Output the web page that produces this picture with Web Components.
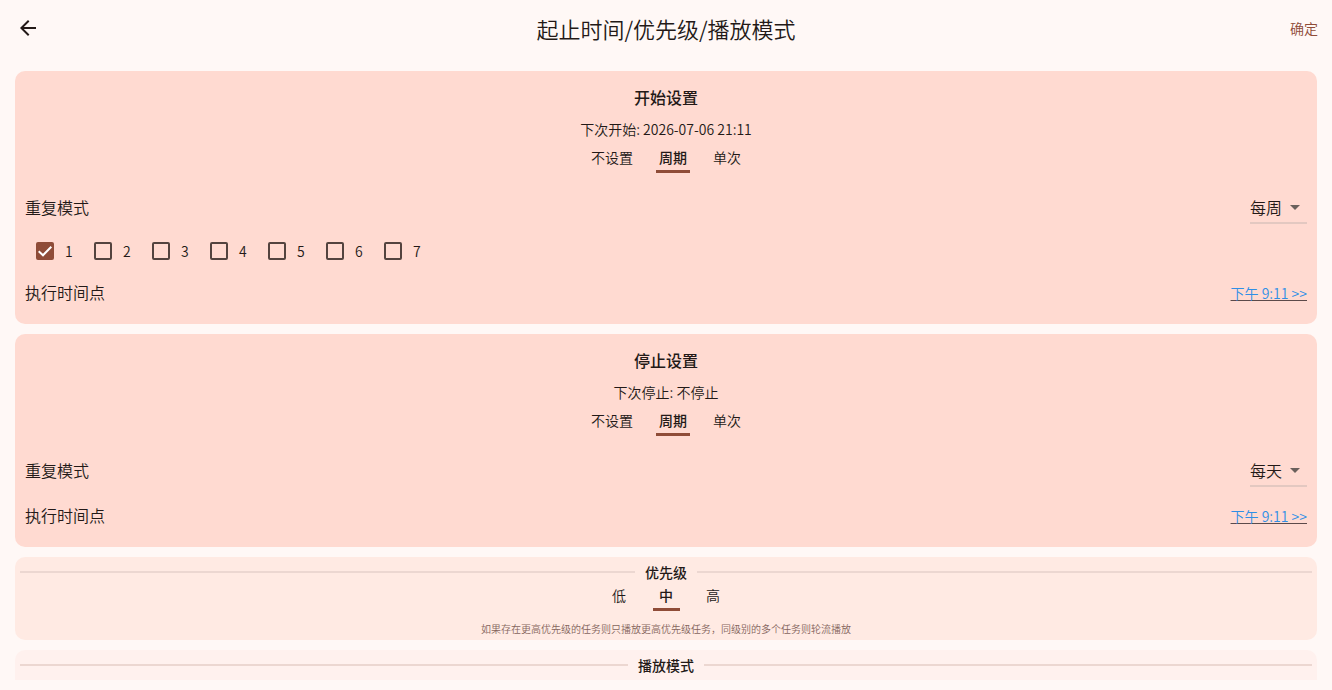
<!DOCTYPE html>
<html lang="zh-CN">
<head>
<meta charset="utf-8">
<meta name="viewport" content="width=device-width, initial-scale=1">
<title>起止时间/优先级/播放模式</title>
<style>
html, body {
  height: 100%;
  margin: 0;
}
body {
  --primary: #8f4c38;
  --text: #231917;
  --muted: #53433f;
  --card: #ffdad1;
  background: #fff8f6;
  color: var(--text);
  font: 350 14px/20px "Noto Sans CJK SC", sans-serif;
}
</style>
</head>
<body>
<task-page>
  <page-header slot="header" title="起止时间/优先级/播放模式" action="确定"></page-header>

  <setting-card heading="开始设置">
    <span slot="summary">下次开始: 2026-07-06 21:11</span>
    <tab-group slot="tabs" items="不设置,周期,单次" selected="1"></tab-group>
    <setting-row label="重复模式" class="tall"><drop-down label="重复模式" items="每周,每天,每月"></drop-down></setting-row>
    <day-picker days="7" checked="1"></day-picker>
    <setting-row label="执行时间点"><time-link value="下午 9:11"></time-link></setting-row>
  </setting-card>

  <setting-card heading="停止设置">
    <span slot="summary">下次停止: 不停止</span>
    <tab-group slot="tabs" items="不设置,周期,单次" selected="1"></tab-group>
    <setting-row label="重复模式" class="tall"><drop-down label="重复模式" items="每天,每周,每月"></drop-down></setting-row>
    <setting-row label="执行时间点"><time-link value="下午 9:11"></time-link></setting-row>
  </setting-card>

  <divider-card heading="优先级" style="--card: #ffeae3">
    <tab-group items="低,中,高" selected="1"></tab-group>
    <span slot="hint">如果存在更高优先级的任务则只播放更高优先级任务，同级别的多个任务则轮流播放</span>
  </divider-card>

  <divider-card heading="播放模式" style="--card: #fff1ee"></divider-card>
</task-page>

<script>
class BaseElement extends HTMLElement {
  constructor() {
    super();
    this._shadowRoot = this.attachShadow({ mode: 'open' });
  }

  get items() {
    return (this.getAttribute('items') || '').split(',');
  }

  attr(name) {
    return this.getAttribute(name) || '';
  }

  connectedCallback() {
    this._shadowRoot.innerHTML = this.render();
    this.attachEvents();
  }

  attachEvents() {}
}

class TaskPage extends BaseElement {
  render() {
    return `
<style>
:host {
  display: flex;
  flex-direction: column;
  height: 100vh;
  box-sizing: border-box;
  padding-bottom: 10px;
}
main {
  flex: 1;
  min-height: 0;
  overflow-y: auto;
  scrollbar-width: none;
  display: flex;
  flex-direction: column;
  gap: 10px;
  padding: 15px 15px 0;
}
</style>
<slot name="header"></slot>
<main><slot></slot></main>
`;
  }
}

class PageHeader extends BaseElement {
  render() {
    return `
<style>
:host {
  display: grid;
  grid-template-columns: 1fr auto 1fr;
  align-items: center;
  height: 56px;
  flex: none;
}
h1 {
  margin: 0;
  font-size: 22px;
  line-height: 28px;
  font-weight: inherit;
}
button {
  border: 0;
  background: none;
  font: inherit;
  cursor: pointer;
}
.back {
  justify-self: start;
  display: flex;
  padding: 16px;
  color: var(--text);
}
.action {
  justify-self: end;
  padding: 8px 14px;
  color: var(--primary);
}
</style>
<button class="back" aria-label="返回">
  <svg width="24" height="24" viewBox="0 0 24 24" fill="currentColor"><path d="M20 11H7.83l5.59-5.59L12 4l-8 8 8 8 1.41-1.41L7.83 13H20v-2z"/></svg>
</button>
<h1>${this.attr('title')}</h1>
<button class="action">${this.attr('action')}</button>
`;
  }
}

class SettingCard extends BaseElement {
  render() {
    return `
<style>
:host {
  display: flex;
  flex-direction: column;
  flex: none;
  padding: 14px 10px 10px;
  border-radius: 10px;
  background: var(--card);
}
header {
  display: flex;
  flex-direction: column;
  align-items: center;
  margin-bottom: 11px;
}
h2 {
  margin: 0 0 10px;
  font-size: 16px;
  line-height: 24px;
  font-weight: 500;
}
slot[name="summary"] {
  display: block;
  margin-bottom: 5px;
}
</style>
<header>
  <h2>${this.attr('heading')}</h2>
  <slot name="summary"></slot>
  <slot name="tabs"></slot>
</header>
<slot></slot>
`;
  }
}

class DividerCard extends BaseElement {
  render() {
    return `
<style>
:host {
  display: flex;
  flex-direction: column;
  align-items: center;
  flex: none;
  min-height: 78px;
  padding: 5px 5px 0;
  border-radius: 10px;
  background: var(--card);
}
header {
  display: flex;
  align-items: center;
  align-self: stretch;
  gap: 10px;
  height: 20px;
}
header::before,
header::after {
  content: "";
  flex: 1;
  height: 2px;
  background: #ecd7d1;
}
h2 {
  margin: 0;
  font-size: 14px;
  line-height: 20px;
  font-weight: 500;
}
slot[name="hint"] {
  display: block;
  margin-top: 9px;
  font-size: 10px;
  line-height: 18px;
  color: #85655d;
}
</style>
<header><h2>${this.attr('heading')}</h2></header>
<slot></slot>
<slot name="hint"></slot>
`;
  }
}

class TabGroup extends BaseElement {
  render() {
    const selected = Number(this.attr('selected'));
    return `
<style>
:host {
  display: flex;
  justify-content: center;
}
div {
  display: flex;
  gap: 20px;
}
button {
  box-sizing: border-box;
  min-width: 27px;
  height: 29px;
  padding: 0 3px;
  border: 0;
  border-bottom: 3px solid transparent;
  background: none;
  color: inherit;
  font: inherit;
  cursor: pointer;
}
button[aria-selected="true"] {
  border-color: var(--primary);
  font-weight: 500;
}
</style>
<div role="tablist">
  ${this.items.map((item, i) =>
    `<button role="tab" aria-selected="${i === selected}">${item}</button>`).join('')}
</div>
`;
  }

  attachEvents() {
    const tabs = [...this._shadowRoot.querySelectorAll('button')];
    tabs.forEach((tab) => {
      tab.addEventListener('click', () => {
        tabs.forEach((t) => t.setAttribute('aria-selected', t === tab));
      });
    });
  }
}

class SettingRow extends BaseElement {
  render() {
    return `
<style>
:host {
  display: flex;
  align-items: center;
  justify-content: space-between;
  height: 42px;
}
:host(.tall) {
  height: 48px;
}
span {
  padding-bottom: 2px;
  font-size: 16px;
  line-height: 24px;
}
</style>
<span>${this.attr('label')}</span>
<slot></slot>
`;
  }
}

class DropDown extends BaseElement {
  render() {
    return `
<style>
:host {
  display: grid;
  align-items: center;
  border-bottom: 2px solid #e3c8c1;
}
select, svg {
  grid-area: 1 / 1;
}
select {
  appearance: none;
  height: 30px;
  padding: 0 24px 0 0;
  border: 0;
  border-radius: 0;
  background: none;
  color: inherit;
  font: inherit;
  font-size: 16px;
}
svg {
  justify-self: end;
  pointer-events: none;
}
</style>
<select aria-label="${this.attr('label')}">
  ${this.items.map((item) => `<option>${item}</option>`).join('')}
</select>
<svg width="24" height="24" viewBox="0 0 24 24" fill="#6a605c"><path d="M7 10l5 5 5-5z"/></svg>
`;
  }
}

class DayPicker extends BaseElement {
  render() {
    const checked = this.attr('checked').split(',').map(Number);
    const days = Array.from({ length: Number(this.attr('days')) }, (_, i) => i + 1);
    return `
<style>
:host {
  display: flex;
  flex-wrap: wrap;
  align-items: center;
  gap: 20px;
  padding: 0 11px;
  min-height: 38px;
  margin-bottom: 2px;
}
label {
  display: flex;
  align-items: center;
  gap: 11px;
  width: 38px;
}
.box {
  display: grid;
}
input, svg {
  grid-area: 1 / 1;
}
input {
  appearance: none;
  box-sizing: border-box;
  width: 18px;
  height: 18px;
  margin: 0;
  border: 2px solid var(--muted);
  border-radius: 2px;
}
input:checked {
  border-color: var(--primary);
  background: var(--primary);
}
svg {
  pointer-events: none;
  visibility: hidden;
}
input:checked + svg {
  visibility: visible;
}
</style>
${days.map((day) => `
<label>
  <span class="box">
    <input type="checkbox" ${checked.includes(day) ? 'checked' : ''}>
    <svg width="18" height="18" viewBox="0 0 18 18" fill="none" stroke="#fff" stroke-width="2"><path d="M2.7 9.3L7 13.3L15.3 4.7"/></svg>
  </span>
  <span>${day}</span>
</label>`).join('')}
`;
  }
}

class TimeLink extends BaseElement {
  render() {
    return `
<style>
:host {
  display: block;
}
a {
  color: #2f8fe6;
  text-decoration: underline;
  text-decoration-color: #5c4a4a;
}
</style>
<a href="#">${this.attr('value')} &gt;&gt;</a>
`;
  }
}

window.customElements.define('task-page', TaskPage);
window.customElements.define('page-header', PageHeader);
window.customElements.define('setting-card', SettingCard);
window.customElements.define('divider-card', DividerCard);
window.customElements.define('tab-group', TabGroup);
window.customElements.define('setting-row', SettingRow);
window.customElements.define('drop-down', DropDown);
window.customElements.define('day-picker', DayPicker);
window.customElements.define('time-link', TimeLink);
</script>
</body>
</html>
